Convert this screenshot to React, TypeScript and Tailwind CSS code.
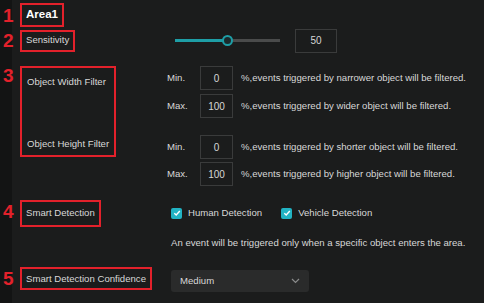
const font = { fontFamily: '"Liberation Sans", Arial, sans-serif' };

function Num({ n }: { n: string }) {
  return <span className="block w-[17px] text-[19px] font-bold leading-none text-[#e3212b] shrink-0">{n}</span>;
}

function Box({ children, className = "" }: { children: React.ReactNode; className?: string }) {
  return (
    <div className={`w-fit whitespace-nowrap border-[2.5px] border-[#e3212b] px-[4px] flex items-center ${className}`}>
      {children}
    </div>
  );
}

function NumInput({ value, w = "w-[33px]" }: { value: string; w?: string }) {
  return (
    <div className={`${w} h-[24px] border border-[#3a3b3b] flex items-center justify-center text-[10px] text-[#d6d6d6]`}>
      {value}
    </div>
  );
}

function Check({ label }: { label: string }) {
  return (
    <div className="flex items-center gap-[6px]">
      <span className="w-[11px] h-[11px] rounded-[2px] bg-[#22b3c3] flex items-center justify-center">
        <svg width="8" height="8" viewBox="0 0 8 8">
          <path d="M1.3 4.2 L3.2 6 L6.8 2" stroke="white" strokeWidth="1.4" fill="none" />
        </svg>
      </span>
      <span>{label}</span>
    </div>
  );
}

function FilterRow({ tag, value, text }: { tag: string; value: string; text: string }) {
  return (
    <div className="flex items-center whitespace-nowrap">
      <span className="w-[33px]">{tag}</span>
      <NumInput value={value} />
      <span className="ml-[8px]">{text}</span>
    </div>
  );
}

export default function App() {
  return (
    <div
      style={font}
      className="w-[484px] h-[303px] overflow-hidden bg-[linear-gradient(to_right,#131414_12px,#1b1c1c_12px)] text-[9.6px] text-[#d8d8d8] pl-[3px] pt-[3px]"
    >
      <div className="flex items-center h-[24px]">
        <Num n="1" />
        <Box className="h-[24px]">
          <span className="text-[11.5px] font-bold text-white">Area1</span>
        </Box>
      </div>

      <div className="flex items-center h-[23px] mt-[2px]">
        <Num n="2" />
        <div className="w-[147px] shrink-0">
          <Box className="h-[22px]">Sensitivity</Box>
        </div>
        <div className="ml-[8px] w-[105px] h-[3px] bg-[#4a4b4b] relative">
          <div className="h-full w-[52px] bg-[#1e9ea6]" />
          <div className="absolute left-[47px] top-[-4px] w-[11px] h-[11px] rounded-full border-2 border-[#1e9ea6] bg-[#1b2a2c]" />
        </div>
        <div className="ml-[15px]">
          <NumInput value="50" w="w-[42px]" />
        </div>
      </div>

      <div className="flex mt-[14px]">
        <Num n="3" />
        <div className="w-[147px] shrink-0">
          <div className="w-fit whitespace-nowrap h-[91px] border-[2.5px] border-[#e3212b] px-[5px] pt-[7px] pb-[4px] flex flex-col justify-between">
            <span>Object Width Filter</span>
            <span>Object Height Filter</span>
          </div>
        </div>
        <div className="flex flex-col">
          <FilterRow tag="Min." value="0" text="%,events triggered by narrower object will be filtered." />
          <div className="mt-[4px]">
            <FilterRow tag="Max." value="100" text="%,events triggered by wider object will be filtered." />
          </div>
          <div className="mt-[17px]">
            <FilterRow tag="Min." value="0" text="%,events triggered by shorter object will be filtered." />
          </div>
          <div className="mt-[3px]">
            <FilterRow tag="Max." value="100" text="%,events triggered by higher object will be filtered." />
          </div>
        </div>
      </div>

      <div className="flex mt-[14px]">
        <div className="w-[17px] shrink-0 pt-[2px]">
          <Num n="4" />
        </div>
        <div className="w-[147px] shrink-0">
          <Box className="h-[27px]">Smart Detection</Box>
        </div>
        <div className="flex flex-col ml-[4px] whitespace-nowrap">
          <div className="flex items-center h-[27px] gap-[19px]">
            <Check label="Human Detection" />
            <Check label="Vehicle Detection" />
          </div>
          <div className="mt-[9px]">An event will be triggered only when a specific object enters the area.</div>
        </div>
      </div>

      <div className="flex items-start mt-[17px]">
        <div className="w-[17px] shrink-0 h-[23px] flex items-center">
          <Num n="5" />
        </div>
        <div className="w-[147px] shrink-0">
          <Box className="h-[23px]">Smart Detection Confidence</Box>
        </div>
        <div className="ml-[4px] mt-[3px] w-[138px] h-[22px] rounded-[3px] bg-[#2a2b2b] flex items-center justify-between px-[9px]">
          <span>Medium</span>
          <svg width="9" height="6" viewBox="0 0 9 6">
            <path d="M1 1 L4.5 4.5 L8 1" stroke="#8a8b8b" strokeWidth="1.2" fill="none" />
          </svg>
        </div>
      </div>
    </div>
  );
}
